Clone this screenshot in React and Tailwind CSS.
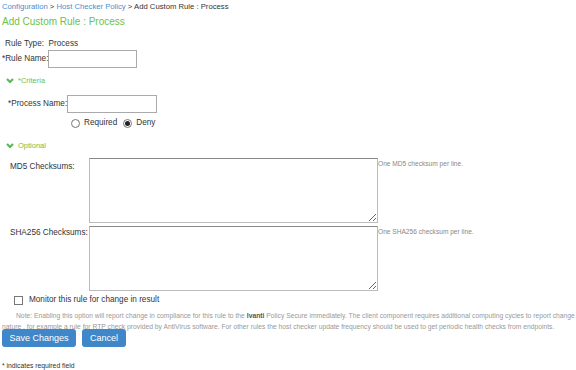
import React from "react";

function Chevron() {
  return (
    <svg width="8" height="6" viewBox="0 0 8 6" className="mr-[4px]">
      <path d="M1 1 L4 4 L7 1" fill="none" stroke="#5cb85c" strokeWidth="2.2" />
    </svg>
  );
}

function Radio({ checked }) {
  return (
    <span className="w-[9px] h-[9px] rounded-full border border-[#777] bg-white flex items-center justify-center">
      {checked && <span className="w-[5px] h-[5px] rounded-full bg-[#222]" />}
    </span>
  );
}

export default function App() {
  return (
    <div className="w-[576px] h-[370px] overflow-hidden bg-white text-[#333] text-[8.2px]" style={{ fontFamily: '"Liberation Sans", Arial, sans-serif' }}>
      <div className="pl-[2px] pt-[1px] h-[12px] leading-[12px] text-[7.7px]">
        <span className="text-[#4a8fce]">Configuration</span>
        <span className="text-[#333]"> &gt; </span>
        <span className="text-[#4a8fce]">Host Checker Policy</span>
        <span className="text-[#333]"> &gt; Add Custom Rule : Process</span>
      </div>
      <div className="pl-[2px] mt-[2px] text-[10px] leading-[16px] text-[#6cc24a]">Add Custom Rule : Process</div>
      <div className="pl-[5px] mt-[8px] leading-[12px]">Rule Type:&nbsp;&nbsp;Process</div>
      <div className="flex items-center pl-[2px] mt-[0px]">
        <span>*Rule Name:</span>
        <input className="w-[89px] h-[18px] border border-[#aaa] bg-white" />
      </div>
      <div className="flex items-center pl-[6px] mt-[7px] h-[12px] text-[7.5px] text-[#6cc24a]">
        <Chevron />
        <span>*Criteria</span>
      </div>
      <div className="flex items-center pl-[8px] mt-[8px]">
        <span>*Process Name:</span>
        <input className="w-[90px] h-[18px] border border-[#aaa] bg-white" />
      </div>
      <div className="flex items-center pl-[71px] mt-[3px] h-[14px]">
        <Radio />
        <span className="ml-[4px]">Required</span>
        <span className="ml-[6px]"><Radio checked /></span>
        <span className="ml-[4px]">Deny</span>
      </div>
      <div className="flex items-center pl-[6px] mt-[10px] h-[12px] text-[7.5px] text-[#6cc24a]">
        <Chevron />
        <span>Optional</span>
      </div>
      <div className="flex items-start mt-[6px]">
        <div className="w-[89px] pl-[10px] pt-[3px] whitespace-nowrap">MD5 Checksums:</div>
        <textarea className="w-[289px] h-[65px] border border-[#bbb] border-t-[#888] bg-white block" />
        <div className="pt-[1px] text-[6.6px] text-[#888]">One MD5 checksum per line.</div>
      </div>
      <div className="flex items-start mt-[3px]">
        <div className="w-[89px] pl-[10px] pt-[1px] whitespace-nowrap">SHA256 Checksums:</div>
        <textarea className="w-[289px] h-[65px] border border-[#bbb] border-t-[#888] bg-white block" />
        <div className="pt-[1px] text-[6.6px] text-[#888]">One SHA256 checksum per line.</div>
      </div>
      <div className="flex items-center pl-[14px] mt-[2px] h-[14px]">
        <span className="w-[9px] h-[9px] border border-[#777] bg-white mr-[6px]" />
        <span>Monitor this rule for change in result</span>
      </div>
      <div className="mt-[3px] pl-[2px] pr-[1px] text-[6.75px] leading-[11px] text-[#999] indent-[14px]">
        Note: Enabling this option will report change in compliance for this rule to the <b className="text-[#555]">Ivanti</b> Policy Secure immediately. The client component requires additional computing cycles to report change nature , for example a rule for RTP check provided by AntiVirus software. For other rules the host checker update frequency should be used to get periodic health checks from endpoints.
      </div>
      <div className="flex pl-[2px] mt-[-3px] gap-[6px]">
        <button className="h-[18px] w-[74px] rounded-[3px] bg-[#3f87c8] text-white text-[9px] leading-[18px]">Save Changes</button>
        <button className="h-[18px] w-[44px] rounded-[3px] bg-[#3f87c8] text-white text-[9px] leading-[18px]">Cancel</button>
      </div>
      <div className="pl-[2px] mt-[14px] text-[6.8px] leading-[10px] text-[#333]">* indicates required field</div>
    </div>
  );
}
